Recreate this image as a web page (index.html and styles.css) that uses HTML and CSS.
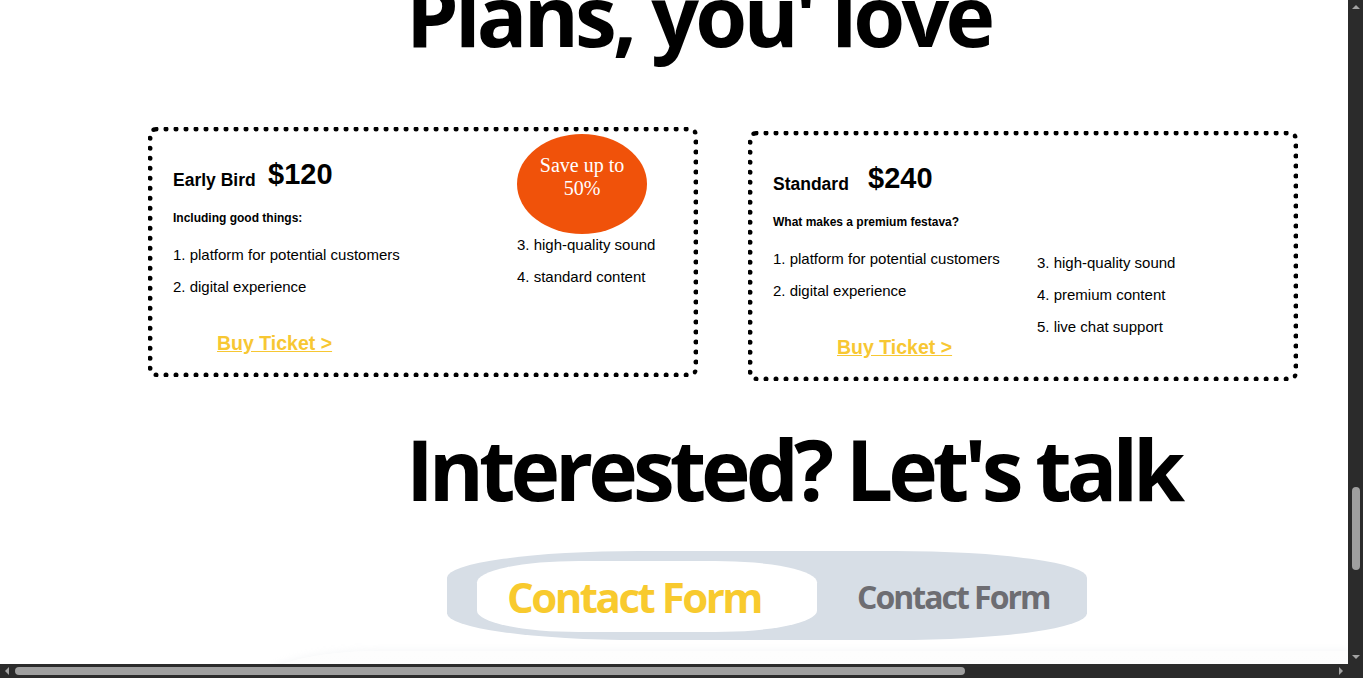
FILE: index.html
```html
<!DOCTYPE html>
<html lang="en">
<head>
<meta charset="utf-8">
<title>Plans</title>
<link rel="stylesheet" href="styles.css">
</head>
<body>
<div class="screen">
  <div class="viewport">
    <main class="page">
      <h1 class="heading heading-plans">Plans, you' love</h1>
      <section class="plans">
        <article class="plan">
          <div class="plan-main plan-main-early">
            <div class="plan-head"><span class="plan-name">Early Bird</span><span class="plan-price">$120</span></div>
            <p class="plan-sub">Including good things:</p>
            <ul class="features">
              <li>1. platform for potential customers</li>
              <li>2. digital experience</li>
            </ul>
            <a class="buy buy-early" href="#">Buy Ticket &gt;</a>
          </div>
          <div class="plan-side plan-side-early">
            <div class="badge">Save up to 50%</div>
            <ul class="features features-side">
              <li>3. high-quality sound</li>
              <li>4. standard content</li>
            </ul>
          </div>
        </article>
        <article class="plan plan-standard">
          <div class="plan-main plan-main-standard">
            <div class="plan-head"><span class="plan-name">Standard</span><span class="plan-price">$240</span></div>
            <p class="plan-sub">What makes a premium festava?</p>
            <ul class="features">
              <li>1. platform for potential customers</li>
              <li>2. digital experience</li>
            </ul>
            <a class="buy buy-standard" href="#">Buy Ticket &gt;</a>
          </div>
          <div class="plan-side plan-side-standard">
            <ul class="features">
              <li>3. high-quality sound</li>
              <li>4. premium content</li>
              <li>5. live chat support</li>
            </ul>
          </div>
        </article>
      </section>
      <h1 class="heading heading-talk">Interested? Let's talk</h1>
      <div class="tabs">
        <span class="tab tab-active">Contact Form</span>
        <span class="tab tab-idle">Contact Form</span>
      </div>
      <div class="form-card"></div>
    </main>
  </div>
  <div class="vbar">
    <span class="arrow arrow-up"></span>
    <div class="vtrack"><span class="vthumb"></span></div>
    <span class="arrow arrow-down"></span>
  </div>
  <div class="hbar">
    <span class="arrow arrow-left"></span>
    <div class="htrack"><span class="hthumb"></span></div>
    <span class="arrow arrow-right"></span>
  </div>
  <div class="corner"></div>
</div>
</body>
</html>
```

FILE: styles.css
```css
html, body {
  margin: 0;
  padding: 0;
  background: #ffffff;
}

.screen {
  display: grid;
  grid-template-columns: 1348px 15px;
  grid-template-rows: 664px 14px;
  width: 1363px;
  height: 678px;
  overflow: hidden;
}

.viewport {
  overflow: hidden;
  background: #ffffff;
}

.page {
  display: flex;
  flex-direction: column;
  align-items: flex-start;
}

.heading {
  margin: 0;
  font-family: "Open Sans", sans-serif;
  font-weight: 700;
  font-size: 84px;
  line-height: 84px;
  color: #000;
  margin-left: 406px;
  white-space: nowrap;
}

.heading-plans {
  margin-top: -27px;
  letter-spacing: -3.8px;
}

.heading-talk {
  margin-top: 46px;
  letter-spacing: -5px;
}

/* plans */
.plans {
  display: flex;
  align-items: flex-start;
  gap: 50px;
  margin-top: 70px;
  margin-left: 148px;
  font-family: "Liberation Sans", Arial, sans-serif;
  color: #000;
}

.plan {
  box-sizing: border-box;
  width: 550px;
  height: 250px;
  border: 5px dotted #000;
  border-radius: 8px;
  padding-left: 20px;
  display: flex;
  align-items: flex-start;
}

.plan-standard {
  margin-top: 4px;
}

.plan-main {
  display: flex;
  flex-direction: column;
  align-items: flex-start;
  padding-top: 28px;
}

.plan-main-early { width: 344px; }
.plan-main-standard { width: 264px; }

.plan-head {
  display: flex;
  align-items: flex-end;
}

.plan-name {
  width: 95px;
  font-size: 17.5px;
  font-weight: 700;
  line-height: 1;
}

.plan-price {
  font-size: 29px;
  font-weight: 700;
  line-height: 1;
}

.plan-sub {
  margin: 23px 0 0;
  font-size: 12px;
  font-weight: 700;
  line-height: 1;
}

.features {
  list-style: none;
  margin: 21px 0 0;
  padding: 0;
  display: flex;
  flex-direction: column;
  gap: 12px;
  font-size: 15px;
  line-height: 20px;
  white-space: nowrap;
}

.features-side {
  margin-top: 1px;
}

.buy {
  margin-top: 37px;
  font-size: 19.5px;
  font-weight: 700;
  line-height: 1;
  color: #f7c733;
  text-decoration: underline;
}

.buy-early { margin-left: 44px; }
.buy-standard { margin-left: 64px; }

.plan-side {
  display: flex;
  flex-direction: column;
  align-items: flex-start;
}

.plan-side-early { margin-top: 2px; }
.plan-side-standard { margin-top: 117px; }
.plan-side-standard .features { margin-top: 0; }

.badge {
  box-sizing: border-box;
  width: 130px;
  height: 100px;
  padding: 20px 18px 0;
  border-radius: 50%;
  background: #f0520a;
  color: #ffffff;
  font-family: "Liberation Serif", "Times New Roman", serif;
  font-size: 20px;
  line-height: 23px;
  text-align: center;
}

/* contact tabs */
.tabs {
  box-sizing: border-box;
  margin-top: 40px;
  margin-left: 447px;
  width: 640px;
  height: 89px;
  padding: 10px 0 8px 30px;
  border-radius: 30%;
  background: #d7dee6;
  display: flex;
  align-items: center;
  font-family: "Open Sans", sans-serif;
  font-weight: 700;
  white-space: nowrap;
}

.tab-active {
  box-sizing: border-box;
  width: 340px;
  height: 71px;
  padding-left: 30px;
  border-radius: 30%;
  background: #ffffff;
  color: #f8ca2e;
  font-size: 42px;
  letter-spacing: -2.5px;
  display: flex;
  align-items: center;
}

.tab-idle {
  margin-left: 40px;
  color: #6d6d72;
  font-size: 32px;
  letter-spacing: -2px;
}

.form-card {
  margin-top: 11px;
  margin-left: 262px;
  width: 1086px;
  height: 300px;
  border-radius: 120px 0 0 0 / 30px 0 0 0;
  background: linear-gradient(#fdfdfd, #f7f7f8);
  box-shadow: 0 -2px 6px rgba(200, 205, 215, 0.15);
}

/* scrollbars */
.vbar {
  background: #2b2b2b;
  display: grid;
  grid-template-rows: 14px 1fr 14px;
  justify-items: center;
  align-items: center;
}

.vtrack {
  align-self: stretch;
  display: flex;
  flex-direction: column;
}

.vthumb {
  margin-top: 473px;
  width: 8px;
  height: 83px;
  border-radius: 4px;
  background: #9f9f9f;
}

.hbar {
  background: #2b2b2b;
  display: grid;
  grid-template-columns: 14px 1fr 14px;
  justify-items: center;
  align-items: center;
}

.htrack {
  justify-self: stretch;
  display: flex;
  align-items: center;
}

.hthumb {
  margin-left: 1px;
  width: 950px;
  height: 8px;
  border-radius: 4px;
  background: #9f9f9f;
}

.corner {
  background: #2b2b2b;
}

.arrow {
  width: 0;
  height: 0;
}

.arrow-up {
  border-left: 4px solid transparent;
  border-right: 4px solid transparent;
  border-bottom: 4px solid #a3a3a3;
}

.arrow-down {
  border-left: 4px solid transparent;
  border-right: 4px solid transparent;
  border-top: 4px solid #a3a3a3;
}

.arrow-left {
  border-top: 4px solid transparent;
  border-bottom: 4px solid transparent;
  border-right: 4px solid #a3a3a3;
}

.arrow-right {
  border-top: 4px solid transparent;
  border-bottom: 4px solid transparent;
  border-left: 4px solid #a3a3a3;
}
```
